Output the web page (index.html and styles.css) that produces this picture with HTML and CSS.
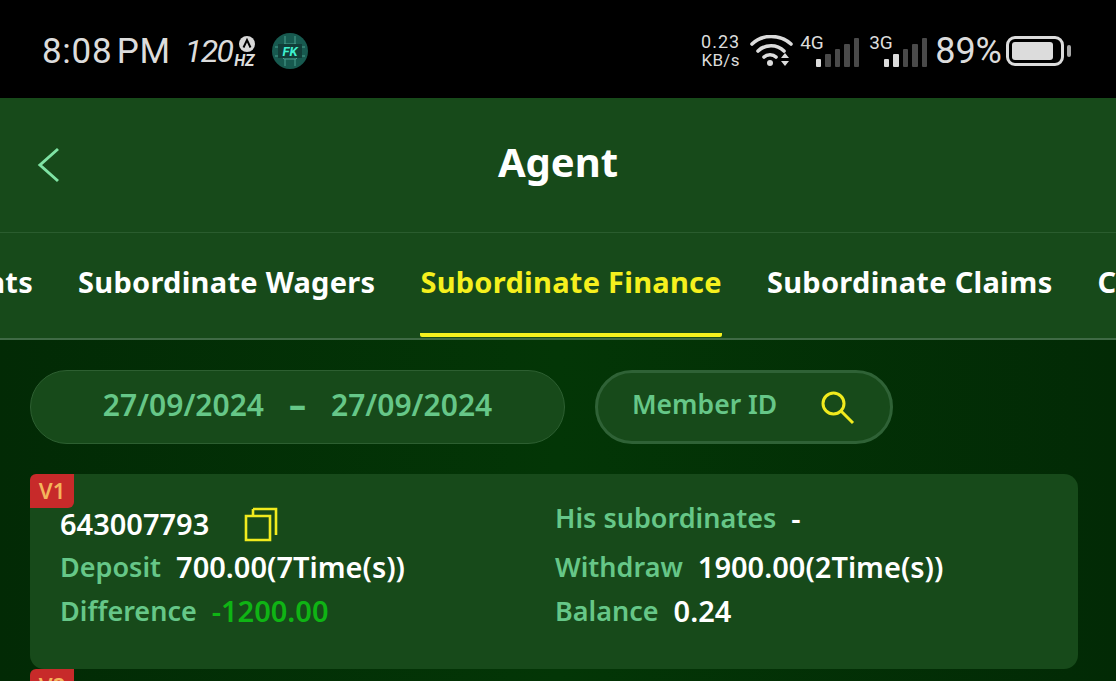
FILE: index.html
```html
<!DOCTYPE html>
<html lang="en">
<head>
    <meta charset="UTF-8">
    <meta name="viewport" content="width=device-width, initial-scale=1.0">
    <title>Agent</title>
    <link rel="stylesheet" href="styles.css">
</head>
<body>
    <div class="status-bar">
        <div class="status-left">
            <span class="clock">8:08 PM</span>
            <span class="hz"><span class="hz-num">120</span><span class="hz-unit"><svg class="hz-a" width="16" height="16" viewBox="0 0 16 16"><circle cx="8" cy="8" r="8" fill="#d8d8d8"/><path d="M4.500 11.500 8 4l3.500 7.500" fill="none" stroke="#000" stroke-width="2"/></svg><b>HZ</b></span></span>
            <svg class="fk" width="36" height="36" viewBox="0 0 36 36">
                <circle cx="18" cy="18" r="18" fill="#17594f"/>
                <path d="M3 14h6l3-3h12l3 3h6M3 23h6l3 3h12l3-3h6M13 3v8M23 3v8M13 33v-7M23 33v-7" fill="none" stroke="#4aa08f" stroke-width="1"/>
                <rect x="6" y="11" width="24" height="14" fill="#123d38"/>
                <text x="18" y="23" text-anchor="middle" class="fk-text">FK</text>
            </svg>
        </div>
        <div class="status-right">
            <div class="speed"><span>0.23</span><span class="speed-unit">KB/s</span></div>
            <svg class="wifi" width="44" height="32" viewBox="0 0 44 32">
                <path d="M2 9C12-1 30-1 41 9M8 16c7-7 19-7 26 0M14 22c3-3 9-3 12 0" fill="none" stroke="#dcdcdc" stroke-width="3.600" stroke-linecap="round"/>
                <circle cx="20" cy="28" r="3" fill="#dcdcdc"/>
                <path d="M31 23l4-5 4 5zM31 26l4 5 4-5z" fill="#dcdcdc"/>
            </svg>
            <div class="signal">
                <span class="net">4G</span>
                <div class="bars"><i class="on b1"></i><i class="b2"></i><i class="b3"></i><i class="b4"></i><i class="b5"></i></div>
            </div>
            <div class="signal">
                <span class="net">3G</span>
                <div class="bars"><i class="on b1"></i><i class="on b2"></i><i class="b3"></i><i class="b4"></i><i class="b5"></i></div>
            </div>
            <span class="percent">89%</span>
            <div class="battery"><div class="battery-body"><div class="battery-fill"></div></div><div class="battery-cap"></div></div>
        </div>
    </div>

    <div class="page">
        <header class="app-header">
            <svg class="back" width="26" height="38" viewBox="0 0 26 38"><path d="M23 3 5 19l18 16" fill="none" stroke="#7fe3a4" stroke-width="3"/></svg>
            <h1>Agent</h1>
        </header>

        <nav class="tabs">
            <span class="tab tab-cut"><span>Stats</span></span>
            <span class="tab">Subordinate Wagers</span>
            <span class="tab active">Subordinate Finance</span>
            <span class="tab">Subordinate Claims</span>
            <span class="tab">Claims</span>
        </nav>

        <div class="filters">
            <div class="date-range">
                <span>27/09/2024</span><span class="dash">–</span><span>27/09/2024</span>
            </div>
            <div class="member-search">
                <span>Member ID</span>
                <svg width="36" height="36" viewBox="0 0 36 36"><circle cx="14.500" cy="14.500" r="10.500" fill="none" stroke="#f0eb1e" stroke-width="3"/><path d="M22 22l12 12" stroke="#f0eb1e" stroke-width="3"/></svg>
            </div>
        </div>

        <section class="card">
            <span class="level">V1</span>
            <div class="card-grid">
                <div class="row id-row">
                    <span class="val">643007793</span>
                    <svg class="copy" width="34" height="36" viewBox="0 0 34 36"><path d="M2 10h24v24H2zM9 3h23v26" fill="none" stroke="#f0eb1e" stroke-width="2.600"/><path d="M9 10V3" stroke="#f0eb1e" stroke-width="2.600"/></svg>
                </div>
                <div class="row row-up"><span class="lbl">His subordinates</span><span class="val">-</span></div>
                <div class="row"><span class="lbl">Deposit</span><span class="val">700.00(7Time(s))</span></div>
                <div class="row"><span class="lbl">Withdraw</span><span class="val">1900.00(2Time(s))</span></div>
                <div class="row"><span class="lbl">Difference</span><span class="val neg">-1200.00</span></div>
                <div class="row"><span class="lbl">Balance</span><span class="val">0.24</span></div>
            </div>
        </section>

        <section class="card-next">
            <span class="level">V2</span>
        </section>
    </div>
</body>
</html>
```

FILE: styles.css
```css
* {
    box-sizing: border-box;
}
html, body {
    margin: 0;
    padding: 0;
    height: 681px;
    overflow: hidden;
}
body {
    font-family: "Noto Sans", "Lato", sans-serif;
    background: #022d05;
    color: white;
}

/* barra de estado */
.status-bar {
    height: 98px;
    background: #000;
    color: #dcdcdc;
    display: flex;
    justify-content: space-between;
    align-items: center;
    padding: 4px 45px 0 42px;
    font-family: "Roboto", sans-serif;
}
.status-left, .status-right {
    display: flex;
    align-items: center;
}
.clock {
    font-size: 35px;
    word-spacing: -5px;
    letter-spacing: 0.7px;
}
.hz {
    display: flex;
    align-items: flex-end;
    margin-left: 14px;
    font-style: italic;
    height: 36px;
}
.hz-num {
    font-size: 32px;
    letter-spacing: -1.500px;
    line-height: 36px;
}
.hz-unit {
    display: flex;
    flex-direction: column;
    align-items: flex-end;
    width: 22px;
    margin-top: -4px;
}
.hz-unit b {
    font-size: 16px;
    line-height: 17px;
}
.fk {
    margin-left: 17px;
}
.fk-text {
    font: italic 700 13px "Roboto", sans-serif;
    fill: #3ff0cf;
}
.speed {
    display: flex;
    flex-direction: column;
    align-items: center;
    font-size: 18px;
    line-height: 19px;
    letter-spacing: 1px;
}
.speed-unit {
    font-size: 17px;
    letter-spacing: 0.3px;
}
.wifi {
    margin-left: 10px;
}
.signal {
    position: relative;
    width: 59px;
    height: 32px;
    margin-left: 6px;
}
.signal + .signal {
    margin-left: 10px;
    width: 58px;
}
.net {
    position: absolute;
    left: 0;
    top: -2px;
    font-size: 19px;
    line-height: 20px;
}
.bars {
    position: absolute;
    right: 0;
    bottom: 0;
    display: flex;
    align-items: flex-end;
    gap: 4px;
}
.bars i {
    display: block;
    width: 5.500px;
    background: #4a4a4a;
    border-radius: 1px;
}
.bars i.on {
    background: #dcdcdc;
}
.b1 { height: 8px; }
.b2 { height: 13px; }
.b3 { height: 18px; }
.b4 { height: 23px; }
.b5 { height: 29px; }
.percent {
    font-size: 36px;
    margin-left: 8px;
}
.battery {
    display: flex;
    align-items: center;
    margin-left: 4px;
}
.battery-body {
    width: 58px;
    height: 30px;
    border: 3px solid #dcdcdc;
    border-radius: 9px;
    padding: 3px;
}
.battery-fill {
    width: 90%;
    height: 100%;
    background: #dcdcdc;
    border-radius: 3px;
}
.battery-cap {
    width: 4px;
    height: 12px;
    margin-left: 3px;
    background: #a8a8a8;
    border-radius: 2px;
}

/* cabecera */
.page {
    height: 583px;
    background: linear-gradient(90deg, #022a05, #033606 50%, #022a05);
}
.app-header {
    position: relative;
    height: 135px;
    background: #174a1a;
    border-bottom: 1px solid #2a5c2e;
    display: flex;
    justify-content: center;
    align-items: center;
}
.app-header h1 {
    margin: 0 0 8px;
    font-size: 40px;
    font-weight: 700;
}
.back {
    position: absolute;
    left: 35px;
    top: 48px;
}

/* pestañas */
.tabs {
    height: 107px;
    background: #174a1a;
    border-bottom: 2px solid #3f6a45;
    display: flex;
    gap: 45px;
    white-space: nowrap;
    overflow: hidden;
}
.tab {
    flex: none;
    height: 104px;
    padding-top: 31px;
    font-size: 29px;
    font-weight: 700;
    letter-spacing: 0.280px;
    line-height: 36px;
}
.tab-cut {
    width: 33px;
    display: flex;
    justify-content: flex-end;
    overflow: hidden;
}
.tab.active {
    color: #f5f01e;
    border-bottom: 4px solid #f5f01e;
    border-radius: 0 0 2px 2px;
}

/* filtros */
.filters {
    display: flex;
    gap: 30px;
    padding: 30px 30px 0;
}
.date-range, .member-search {
    height: 74px;
    border-radius: 37px;
    background: #174a1a;
    color: #66c788;
    font-weight: 600;
    display: flex;
    align-items: center;
    padding-bottom: 6px;
}
.date-range {
    width: 535px;
    justify-content: center;
    gap: 25px;
    border: 1px solid #2d5f31;
    font-size: 30px;
}
.dash {
    width: 17px;
    font-size: 34px;
    font-weight: 800;
    line-height: 36px;
    text-align: center;
}
.member-search {
    width: 298px;
    border: 3px solid #2f6236;
    padding-left: 34px;
    gap: 42px;
    font-size: 26.500px;
}
.member-search svg {
    margin-top: 6px;
}

/* tarjeta */
.card {
    position: relative;
    margin: 30px 38px 0 30px;
    height: 195px;
    background: #174a1a;
    border-radius: 14px;
}
.level {
    position: absolute;
    left: 0;
    top: 0;
    width: 44px;
    height: 34px;
    background: #c72a2a;
    border-radius: 6px 0 6px 0;
    color: #f5b45c;
    font-size: 22px;
    font-weight: 600;
    line-height: 32px;
    text-align: center;
}
.card-grid {
    display: grid;
    grid-template-columns: 495px 1fr;
    grid-template-rows: 41px 44px 44px;
    padding: 29px 0 0 30px;
}
.row {
    display: flex;
    align-items: center;
    gap: 15px;
    font-weight: 600;
    white-space: nowrap;
}
.row-up {
    margin-top: -12px;
}
.lbl {
    color: #66c788;
    font-size: 27px;
}
.val {
    color: white;
    font-size: 29px;
}
.val.neg {
    color: #0fb414;
}
.copy {
    margin-left: 20px;
}
.card-next {
    position: relative;
    margin: 0 38px 0 30px;
    height: 13px;
    overflow: hidden;
}
```
